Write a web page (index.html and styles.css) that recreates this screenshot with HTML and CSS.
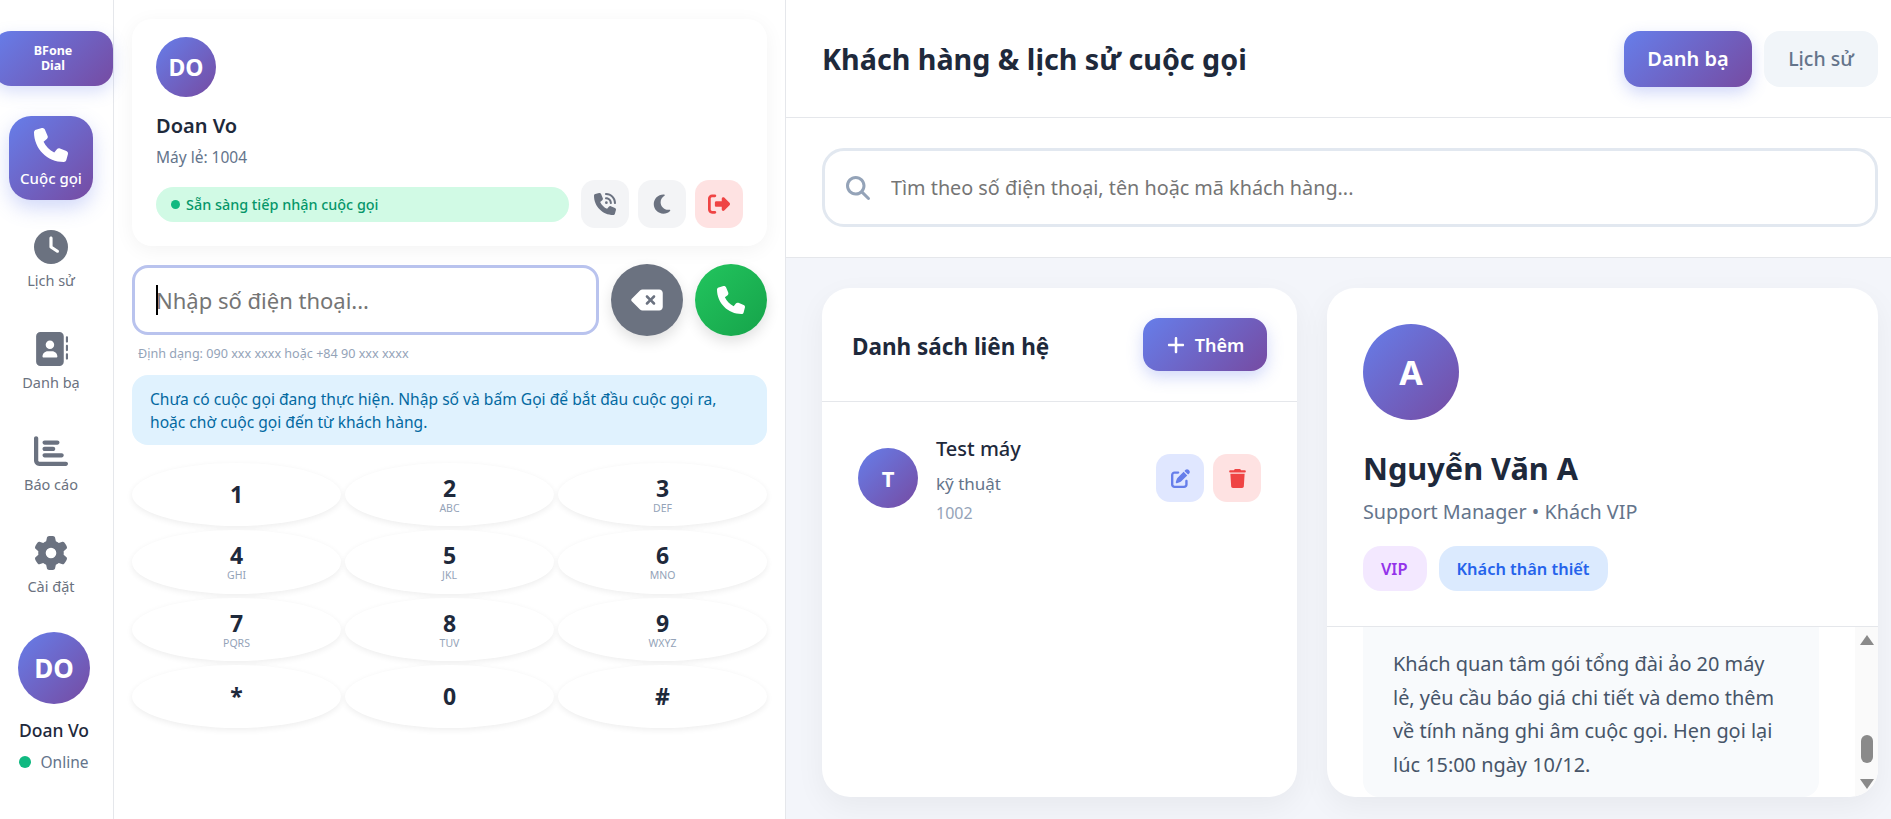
FILE: index.html
```html
<!DOCTYPE html>
<html lang="vi">
<head>
    <meta charset="UTF-8">
    <meta name="viewport" content="width=device-width, initial-scale=1.0">
    <title>BFone Dial</title>
    <link rel="stylesheet" href="styles.css">
</head>
<body>
    <svg class="sprite" xmlns="http://www.w3.org/2000/svg">
        <symbol id="i-phone" viewBox="0 0 512 512"><path d="M164.9 24.6c-7.7-18.6-28-28.5-47.4-23.2l-88 24C12.1 30.2 0 46 0 64C0 311.4 200.6 512 448 512c18 0 33.8-12.1 38.6-29.5l24-88c5.3-19.4-4.6-39.7-23.2-47.4l-96-40c-16.3-6.8-35.2-2.1-46.3 11.6L304.7 368C234.3 334.7 177.3 277.7 144 207.3L193.3 167c13.7-11.2 18.4-30 11.6-46.3l-40-96z"/></symbol>
        <symbol id="i-clock" viewBox="0 0 512 512"><path d="M256 0a256 256 0 1 1 0 512A256 256 0 1 1 256 0zM232 120V256c0 8 4 15.5 10.7 20l96 64c11 7.4 25.9 4.4 33.3-6.7s4.4-25.9-6.7-33.3L280 243.2V120c0-13.3-10.7-24-24-24s-24 10.7-24 24z"/></symbol>
        <symbol id="i-book" viewBox="0 0 512 512"><path d="M96 0C60.7 0 32 28.7 32 64V448c0 35.3 28.7 64 64 64H384c35.3 0 64-28.7 64-64V64c0-35.3-28.7-64-64-64H96zM208 288h64c44.2 0 80 35.8 80 80c0 8.8-7.2 16-16 16H144c-8.8 0-16-7.2-16-16c0-44.2 35.8-80 80-80zm-32-96a64 64 0 1 1 128 0 64 64 0 1 1 -128 0zM512 80c0-8.8-7.2-16-16-16s-16 7.2-16 16v64c0 8.8 7.2 16 16 16s16-7.2 16-16V80zM496 192c-8.8 0-16 7.2-16 16v64c0 8.8 7.2 16 16 16s16-7.2 16-16V208c0-8.8-7.2-16-16-16zm16 144c0-8.8-7.2-16-16-16s-16 7.2-16 16v64c0 8.8 7.2 16 16 16s16-7.2 16-16V336z"/></symbol>
        <symbol id="i-chart" viewBox="0 0 512 512"><path d="M32 32c17.7 0 32 14.3 32 32V400c0 8.8 7.2 16 16 16H480c17.7 0 32 14.3 32 32s-14.3 32-32 32H80c-44.2 0-80-35.8-80-80V64C0 46.3 14.3 32 32 32zm96 96c0-17.7 14.3-32 32-32l192 0c17.7 0 32 14.3 32 32s-14.3 32-32 32l-192 0c-17.7 0-32-14.3-32-32zm32 64H288c17.7 0 32 14.3 32 32s-14.3 32-32 32H160c-17.7 0-32-14.3-32-32s14.3-32 32-32zm0 96H416c17.7 0 32 14.3 32 32s-14.3 32-32 32H160c-17.7 0-32-14.3-32-32s14.3-32 32-32z"/></symbol>
        <symbol id="i-gear" viewBox="0 0 512 512"><path d="M495.9 166.6c3.2 8.7 .5 18.4-6.4 24.6l-43.3 39.4c1.1 8.3 1.7 16.8 1.7 25.4s-.6 17.1-1.7 25.4l43.3 39.4c6.9 6.2 9.6 15.9 6.4 24.6c-4.4 11.9-9.7 23.3-15.8 34.3l-4.7 8.1c-6.6 11-14 21.4-22.1 31.2c-5.9 7.2-15.7 9.6-24.5 6.8l-55.7-17.7c-13.4 10.3-28.2 18.9-44 25.4l-12.5 57.1c-2 9.1-9 16.3-18.2 17.8c-13.8 2.3-28 3.5-42.5 3.5s-28.7-1.2-42.5-3.5c-9.2-1.5-16.2-8.7-18.2-17.8l-12.5-57.1c-15.8-6.5-30.6-15.1-44-25.4L83.1 425.9c-8.8 2.8-18.6 .3-24.5-6.8c-8.1-9.8-15.5-20.2-22.1-31.2l-4.7-8.1c-6.1-11-11.4-22.4-15.8-34.3c-3.2-8.7-.5-18.4 6.4-24.6l43.3-39.4C64.6 273.1 64 264.6 64 256s.6-17.1 1.7-25.4L22.4 191.2c-6.9-6.2-9.6-15.9-6.4-24.6c4.4-11.9 9.7-23.3 15.8-34.3l4.7-8.1c6.6-11 14-21.4 22.1-31.2c5.9-7.2 15.7-9.6 24.5-6.8l55.7 17.7c13.4-10.3 28.2-18.9 44-25.4l12.5-57.1c2-9.1 9-16.3 18.2-17.8C227.3 1.2 241.5 0 256 0s28.7 1.2 42.5 3.5c9.2 1.5 16.2 8.7 18.2 17.8l12.5 57.1c15.8 6.5 30.6 15.1 44 25.4l55.7-17.7c8.8-2.8 18.6-.3 24.5 6.8c8.1 9.8 15.5 20.2 22.1 31.2l4.7 8.1c6.1 11 11.4 22.4 15.8 34.3zM256 336a80 80 0 1 0 0-160 80 80 0 1 0 0 160z"/></symbol>
        <symbol id="i-volume" viewBox="0 0 512 512"><path d="M280 0C408.1 0 512 103.9 512 232c0 13.3-10.7 24-24 24s-24-10.7-24-24c0-101.6-82.4-184-184-184c-13.3 0-24-10.7-24-24s10.7-24 24-24zm8 192a32 32 0 1 1 0 64 32 32 0 1 1 0-64zm-32-72c0-13.3 10.7-24 24-24c75.1 0 136 60.9 136 136c0 13.3-10.7 24-24 24s-24-10.7-24-24c0-48.6-39.4-88-88-88c-13.3 0-24-10.7-24-24zM117.5 1.4c19.4-5.3 39.7 4.6 47.4 23.2l40 96c6.8 16.3 2.1 35.2-11.6 46.3L144 207.3c33.3 70.4 90.3 127.4 160.7 160.7L345 318.7c11.2-13.7 30-18.4 46.3-11.6l96 40c18.6 7.7 28.5 28 23.2 47.4l-24 88C481.8 499.9 466 512 448 512C200.6 512 0 311.4 0 64C0 46 12.1 30.2 29.5 25.4l88-24z"/></symbol>
        <symbol id="i-moon" viewBox="0 0 384 512"><path d="M223.5 32C100 32 0 132.3 0 256S100 480 223.5 480c60.6 0 115.5-24.2 155.8-63.4c5-4.9 6.3-12.5 3.1-18.7s-10.1-9.7-17-8.5c-9.8 1.7-19.8 2.6-30.1 2.6c-96.9 0-175.5-78.8-175.5-176c0-65.8 36-123.1 89.3-153.3c6.1-3.5 9.2-10.5 7.7-17.3s-7.3-11.9-14.3-12.5c-6.3-.5-12.6-.8-19-.8z"/></symbol>
        <symbol id="i-logout" viewBox="0 0 512 512"><path d="M377.9 105.9L500.7 228.7c7.2 7.2 11.3 17.1 11.3 27.3s-4.1 20.1-11.3 27.3L377.9 406.1c-6.4 6.4-15 9.9-24 9.9c-18.7 0-33.9-15.2-33.9-33.9l0-62.1-128 0c-17.7 0-32-14.3-32-32l0-64c0-17.7 14.3-32 32-32l128 0 0-62.1c0-18.7 15.2-33.9 33.9-33.9c9 0 17.6 3.6 24 9.9zM160 96L96 96c-17.7 0-32 14.3-32 32l0 256c0 17.7 14.3 32 32 32l64 0c17.7 0 32 14.3 32 32s-14.3 32-32 32l-64 0c-53 0-96-43-96-96L0 128C0 75 43 32 96 32l64 0c17.7 0 32 14.3 32 32s-14.3 32-32 32z"/></symbol>
        <symbol id="i-delete" viewBox="0 0 576 512"><path d="M576 128c0-35.3-28.7-64-64-64H205.3c-17 0-33.3 6.7-45.3 18.7L9.4 233.4c-6 6-9.4 14.1-9.4 22.6s3.4 16.6 9.4 22.6L160 429.3c12 12 28.3 18.7 45.3 18.7H512c35.3 0 64-28.7 64-64V128zM271 175c9.4-9.4 24.6-9.4 33.9 0l47 47 47-47c9.4-9.4 24.6-9.4 33.9 0s9.4 24.6 0 33.9l-47 47 47 47c9.4 9.4 9.4 24.6 0 33.9s-24.6 9.4-33.9 0l-47-47-47 47c-9.4 9.4-24.6 9.4-33.9 0s-9.4-24.6 0-33.9l47-47-47-47c-9.4-9.4-9.4-24.6 0-33.9z"/></symbol>
        <symbol id="i-search" viewBox="0 0 512 512"><path d="M416 208c0 45.9-14.9 88.3-40 122.7L502.6 457.4c12.5 12.5 12.5 32.8 0 45.3s-32.8 12.5-45.3 0L330.7 376c-34.4 25.2-76.8 40-122.7 40C93.1 416 0 322.9 0 208S93.1 0 208 0S416 93.1 416 208zM208 352a144 144 0 1 0 0-288 144 144 0 1 0 0 288z"/></symbol>
        <symbol id="i-plus" viewBox="0 0 448 512"><path d="M256 80c0-17.7-14.3-32-32-32s-32 14.3-32 32V224H48c-17.7 0-32 14.3-32 32s14.3 32 32 32H192V432c0 17.7 14.3 32 32 32s32-14.3 32-32V288H400c17.7 0 32-14.3 32-32s-14.3-32-32-32H256V80z"/></symbol>
        <symbol id="i-edit" viewBox="0 0 512 512"><path d="M471.6 21.7c-21.9-21.9-57.3-21.9-79.2 0L362.3 51.7l97.9 97.9 30.1-30.1c21.9-21.9 21.9-57.3 0-79.2L471.6 21.7zm-299.2 220c-6.1 6.1-10.8 13.6-13.5 21.9l-29.6 88.8c-2.9 8.6-.6 18.1 5.8 24.6s15.9 8.7 24.6 5.8l88.8-29.6c8.2-2.7 15.7-7.4 21.9-13.5L437.7 172.3 339.7 74.3 172.4 241.7zM96 64C43 64 0 107 0 160V416c0 53 43 96 96 96H352c53 0 96-43 96-96V320c0-17.7-14.3-32-32-32s-32 14.3-32 32v96c0 17.7-14.3 32-32 32H96c-17.7 0-32-14.3-32-32V160c0-17.7 14.3-32 32-32h96c17.7 0 32-14.3 32-32s-14.3-32-32-32H96z"/></symbol>
        <symbol id="i-trash" viewBox="0 0 448 512"><path d="M135.2 17.7L128 32H32C14.3 32 0 46.3 0 64S14.3 96 32 96H416c17.7 0 32-14.3 32-32s-14.3-32-32-32H320l-7.2-14.3C307.4 6.8 296.3 0 284.2 0H163.8c-12.1 0-23.2 6.8-28.6 17.7zM416 128H32L53.2 467c1.6 25.3 22.6 45 47.9 45H346.9c25.3 0 46.3-19.7 47.9-45L416 128z"/></symbol>
    </svg>

    <aside class="sidebar">
        <div class="logo">BFone<br>Dial</div>
        <nav class="nav">
            <a class="nav-item active"><svg class="nav-icon"><use href="#i-phone"/></svg><span>Cuộc gọi</span></a>
            <a class="nav-item"><svg class="nav-icon"><use href="#i-clock"/></svg><span>Lịch sử</span></a>
            <a class="nav-item"><svg class="nav-icon"><use href="#i-book"/></svg><span>Danh bạ</span></a>
            <a class="nav-item"><svg class="nav-icon"><use href="#i-chart"/></svg><span>Báo cáo</span></a>
            <a class="nav-item"><svg class="nav-icon"><use href="#i-gear"/></svg><span>Cài đặt</span></a>
        </nav>
        <div class="side-user">
            <div class="avatar avatar-side">DO</div>
            <div class="side-name">Doan Vo</div>
            <div class="side-status"><i class="dot"></i>Online</div>
        </div>
    </aside>

    <section class="dialer">
        <div class="agent-card">
            <div class="avatar avatar-agent">DO</div>
            <div class="agent-name">Doan Vo</div>
            <div class="agent-ext">Máy lẻ: 1004</div>
            <div class="agent-row">
                <div class="agent-status"><i class="dot dot-small"></i>Sẵn sàng tiếp nhận cuộc gọi</div>
                <button class="tool-btn"><svg><use href="#i-volume"/></svg></button>
                <button class="tool-btn"><svg><use href="#i-moon"/></svg></button>
                <button class="tool-btn danger"><svg><use href="#i-logout"/></svg></button>
            </div>
        </div>

        <div class="dial-row">
            <div class="dial-field">
                <input class="dial-input" type="text" placeholder="Nhập số điện thoại...">
                <span class="caret"></span>
            </div>
            <button class="round-btn backspace"><svg class="icon-delete"><use href="#i-delete"/></svg></button>
            <button class="round-btn call"><svg class="icon-call"><use href="#i-phone"/></svg></button>
        </div>
        <p class="dial-hint">Định dạng: 090 xxx xxxx hoặc +84 90 xxx xxxx</p>
        <p class="call-info">Chưa có cuộc gọi đang thực hiện. Nhập số và bấm Gọi để bắt đầu cuộc gọi ra, hoặc chờ cuộc gọi đến từ khách hàng.</p>

        <div class="keypad">
            <button class="key"><b>1</b></button>
            <button class="key"><b>2</b><small>ABC</small></button>
            <button class="key"><b>3</b><small>DEF</small></button>
            <button class="key"><b>4</b><small>GHI</small></button>
            <button class="key"><b>5</b><small>JKL</small></button>
            <button class="key"><b>6</b><small>MNO</small></button>
            <button class="key"><b>7</b><small>PQRS</small></button>
            <button class="key"><b>8</b><small>TUV</small></button>
            <button class="key"><b>9</b><small>WXYZ</small></button>
            <button class="key"><b>*</b></button>
            <button class="key"><b>0</b></button>
            <button class="key"><b>#</b></button>
        </div>
    </section>

    <main class="content">
        <header class="content-head">
            <h1>Khách hàng &amp; lịch sử cuộc gọi</h1>
            <div class="tabs">
                <button class="tab active">Danh bạ</button>
                <button class="tab">Lịch sử</button>
            </div>
        </header>

        <div class="search-bar">
            <div class="search-box">
                <svg class="search-icon"><use href="#i-search"/></svg>
                <input class="search-input" type="text" placeholder="Tìm theo số điện thoại, tên hoặc mã khách hàng...">
            </div>
        </div>

        <div class="panels">
            <section class="contacts">
                <div class="contacts-head">
                    <h2>Danh sách liên hệ</h2>
                    <button class="add-btn"><svg><use href="#i-plus"/></svg>Thêm</button>
                </div>
                <div class="contact">
                    <div class="avatar avatar-contact">T</div>
                    <div class="contact-text">
                        <div class="contact-name">Test máy</div>
                        <div class="contact-dept">kỹ thuật</div>
                        <div class="contact-ext">1002</div>
                    </div>
                    <button class="tool-btn edit"><svg><use href="#i-edit"/></svg></button>
                    <button class="tool-btn danger"><svg><use href="#i-trash"/></svg></button>
                </div>
            </section>

            <section class="detail">
                <div class="detail-head">
                    <div class="avatar avatar-detail">A</div>
                    <div class="detail-name">Nguyễn Văn A</div>
                    <div class="detail-role">Support Manager • Khách VIP</div>
                    <div class="tags">
                        <span class="tag tag-vip">VIP</span>
                        <span class="tag tag-loyal">Khách thân thiết</span>
                    </div>
                </div>
                <div class="detail-body">
                    <div class="detail-scroll">
                        <p class="note">Khách quan tâm gói tổng đài ảo 20 máy lẻ, yêu cầu báo giá chi tiết và demo thêm về tính năng ghi âm cuộc gọi. Hẹn gọi lại lúc 15:00 ngày 10/12.</p>
                    </div>
                    <div class="scrollbar">
                        <i class="arrow-up"></i>
                        <i class="thumb"></i>
                        <i class="arrow-down"></i>
                    </div>
                </div>
            </section>
        </div>
    </main>
</body>
</html>
```

FILE: styles.css
```css
* {
    box-sizing: border-box;
}
body {
    display: flex;
    height: 100vh;
    margin: 0;
    overflow: hidden;
    font-family: "Noto Sans", "Open Sans", sans-serif;
    background-color: #fff;
    color: #1e293b;
}
button, input {
    font-family: inherit;
}
button {
    border: none;
    padding: 0;
}
p, h1, h2 {
    margin: 0;
}
.sprite {
    display: none;
}
svg {
    fill: currentColor;
}
.avatar {
    display: flex;
    align-items: center;
    justify-content: center;
    flex-shrink: 0;
    border-radius: 50%;
    background: linear-gradient(135deg, #667eea, #764ba2);
    color: #fff;
    font-weight: 700;
}
.dot {
    display: inline-block;
    width: 12px;
    height: 12px;
    margin-right: 9px;
    border-radius: 50%;
    background: #10b981;
}

/* Sidebar */
.sidebar {
    display: flex;
    flex-direction: column;
    flex-shrink: 0;
    width: 114px;
    padding: 31px 0 0 9px;
    border-right: 1px solid #e5e7eb;
}
.logo {
    width: 120px;
    height: 55px;
    margin-left: -16px;
    padding-top: 12px;
    border-radius: 18px;
    background: linear-gradient(135deg, #667eea, #764ba2);
    box-shadow: 0 6px 16px rgba(102, 126, 234, 0.25);
    color: #fff;
    font-size: 12.5px;
    font-weight: 700;
    line-height: 15px;
    text-align: center;
}
.nav {
    display: flex;
    flex-direction: column;
    gap: 18px;
    margin-top: 30px;
}
.nav-item {
    display: flex;
    flex-direction: column;
    align-items: center;
    gap: 7px;
    width: 84px;
    height: 84px;
    padding-top: 12px;
    border-radius: 22px;
    color: #6b7280;
    font-size: 14.5px;
    line-height: 19px;
}
.nav-item.active {
    background: linear-gradient(135deg, #667eea, #764ba2);
    box-shadow: 0 8px 20px rgba(102, 126, 234, 0.3);
    color: #fff;
    font-size: 15px;
    font-weight: 500;
}
.nav-icon {
    width: 34px;
    height: 34px;
}
.side-user {
    display: flex;
    flex-direction: column;
    align-items: center;
    width: 72px;
    margin: 24px 0 0 9px;
}
.avatar-side {
    width: 72px;
    height: 72px;
    font-size: 26px;
}
.side-name {
    margin-top: 15px;
    font-size: 17.5px;
    font-weight: 500;
    line-height: 22px;
    white-space: nowrap;
}
.side-status {
    display: flex;
    align-items: center;
    margin-top: 10px;
    color: #64748b;
    font-size: 15.5px;
    line-height: 22px;
    white-space: nowrap;
}

/* Dialer column */
.dialer {
    flex-shrink: 0;
    width: 672px;
    padding: 19px 18px 0;
    border-right: 1px solid #e5e7eb;
}
.agent-card {
    height: 227px;
    padding: 18px 24px;
    border-radius: 20px;
    background: #fff;
    box-shadow: 0 4px 20px rgba(0, 0, 0, 0.05);
}
.avatar-agent {
    width: 60px;
    height: 60px;
    font-size: 23px;
}
.agent-name {
    margin-top: 16px;
    font-size: 20px;
    font-weight: 600;
    line-height: 26px;
}
.agent-ext {
    margin-top: 8px;
    color: #64748b;
    font-size: 15.5px;
    line-height: 20px;
}
.agent-row {
    display: flex;
    align-items: center;
    gap: 9px;
    margin-top: 13px;
}
.agent-status {
    display: flex;
    align-items: center;
    width: 413px;
    height: 35px;
    margin-right: 3px;
    padding-left: 15px;
    border-radius: 18px;
    background: #d1fae5;
    color: #059669;
    font-size: 14.4px;
    font-weight: 500;
}
.dot-small {
    width: 9px;
    height: 9px;
    margin-right: 6px;
}
.tool-btn {
    display: flex;
    align-items: center;
    justify-content: center;
    flex-shrink: 0;
    width: 48px;
    height: 48px;
    border-radius: 14px;
    background: #f3f4f6;
    color: #6b7280;
}
.tool-btn svg {
    width: 22px;
    height: 22px;
}
.tool-btn.danger {
    background: #fee2e2;
    color: #ef4444;
}
.tool-btn.edit {
    background: #e0e7ff;
    color: #667eea;
}
.dial-row {
    display: flex;
    align-items: center;
    gap: 12px;
    margin-top: 18px;
}
.dial-field {
    position: relative;
    flex: 1;
}
.dial-input {
    display: block;
    width: 100%;
    height: 70px;
    padding: 0 21px;
    border: 3px solid #b9c3ee;
    border-radius: 16px;
    background: #fff;
    outline: none;
    font-size: 22px;
}
.dial-input::placeholder {
    color: #757575;
}
.caret {
    position: absolute;
    top: 20px;
    left: 24px;
    width: 2px;
    height: 30px;
    background: #000;
}
.round-btn {
    display: flex;
    align-items: center;
    justify-content: center;
    flex-shrink: 0;
    width: 72px;
    height: 72px;
    border-radius: 50%;
    box-shadow: 0 6px 14px rgba(0, 0, 0, 0.12);
    color: #fff;
}
.backspace {
    background: #6b7280;
}
.call {
    background: linear-gradient(135deg, #22c55e, #16a34a);
}
.icon-delete {
    width: 32px;
    height: 28px;
}
.icon-call {
    width: 28px;
    height: 28px;
}
.dial-hint {
    margin: 9px 0 0 6px;
    color: #94a3b8;
    font-size: 12.6px;
    line-height: 17px;
}
.call-info {
    margin-top: 13px;
    padding: 13px 18px 11px;
    border-radius: 16px;
    background: #e0f2fe;
    color: #0369a1;
    font-size: 15.6px;
    line-height: 23px;
}
.keypad {
    display: grid;
    grid-template-columns: repeat(3, 1fr);
    grid-auto-rows: 63.3px;
    gap: 4px;
    margin-top: 18px;
}
.key {
    display: flex;
    flex-direction: column;
    align-items: center;
    justify-content: center;
    border-radius: 50%;
    background: #fff;
    box-shadow: 0 2px 6px rgba(0, 0, 0, 0.07);
    color: #1e293b;
}
.key b {
    font-size: 23px;
    font-weight: 700;
    line-height: 27px;
}
.key small {
    color: #94a3b8;
    font-size: 10.5px;
    line-height: 12px;
}

/* Right side */
.content {
    display: flex;
    flex: 1;
    flex-direction: column;
    min-width: 0;
}
.content-head {
    display: flex;
    align-items: center;
    justify-content: space-between;
    height: 118px;
    padding: 0 13px 0 36px;
    border-bottom: 1px solid #e5e7eb;
}
h1 {
    font-size: 28.7px;
    font-weight: 700;
}
.tabs {
    display: flex;
    gap: 12px;
}
.tab {
    width: 114px;
    height: 56px;
    border-radius: 16px;
    background: #f1f5f9;
    color: #64748b;
    font-size: 19.5px;
    font-weight: 500;
}
.tab.active {
    width: 128px;
    background: linear-gradient(135deg, #667eea, #764ba2);
    box-shadow: 0 6px 16px rgba(102, 126, 234, 0.3);
    color: #fff;
    font-size: 20px;
    font-weight: 600;
}
.search-bar {
    height: 140px;
    padding: 30px 13px 0 36px;
    border-bottom: 1px solid #e5e7eb;
}
.search-box {
    display: flex;
    align-items: center;
    height: 79px;
    padding-left: 21px;
    border: 3px solid #e2e8f0;
    border-radius: 22px;
}
.search-icon {
    flex-shrink: 0;
    width: 24px;
    height: 24px;
    color: #94a3b8;
}
.search-input {
    flex: 1;
    margin-left: 19px;
    border: none;
    outline: none;
    font-size: 19.8px;
}
.search-input::placeholder {
    color: #757575;
}
.panels {
    display: grid;
    flex: 1;
    grid-template-columns: 475px 1fr;
    gap: 30px;
    min-height: 0;
    padding: 30px 13px 22px 36px;
    background: #f3f5fa;
}
.contacts, .detail {
    border-radius: 28px;
    background: #fff;
    box-shadow: 0 10px 30px rgba(0, 0, 0, 0.05);
}
.contacts-head {
    display: flex;
    align-items: center;
    justify-content: space-between;
    height: 114px;
    padding: 0 30px;
    border-bottom: 1px solid #e5e7eb;
}
h2 {
    margin-top: 3px;
    font-size: 22.5px;
    font-weight: 700;
}
.add-btn {
    display: flex;
    align-items: center;
    justify-content: center;
    gap: 9px;
    width: 124px;
    height: 53px;
    border-radius: 16px;
    background: linear-gradient(135deg, #667eea, #764ba2);
    box-shadow: 0 6px 16px rgba(102, 126, 234, 0.3);
    color: #fff;
    font-size: 18px;
    font-weight: 600;
}
.add-btn svg {
    width: 20px;
    height: 20px;
}
.contact {
    display: flex;
    align-items: flex-start;
    padding: 33px 36px 0;
}
.avatar-contact {
    width: 60px;
    height: 60px;
    margin-top: 13px;
    font-size: 22px;
}
.contact-text {
    flex: 1;
    margin-left: 18px;
}
.contact-name {
    font-size: 20px;
    font-weight: 500;
    line-height: 28px;
}
.contact-dept {
    margin-top: 9px;
    color: #64748b;
    font-size: 17px;
    line-height: 24px;
}
.contact-ext {
    margin-top: 6px;
    color: #94a3b8;
    font-size: 16px;
    line-height: 22px;
}
.contact .tool-btn {
    margin-top: 19px;
}
.contact .tool-btn svg {
    width: 19px;
    height: 19px;
}
.contact .danger {
    margin-left: 9px;
}
.detail {
    display: flex;
    flex-direction: column;
    min-height: 0;
    overflow: hidden;
}
.detail-head {
    height: 339px;
    padding: 36px 36px 0;
    border-bottom: 1px solid #e5e7eb;
}
.avatar-detail {
    width: 96px;
    height: 96px;
    font-size: 34px;
}
.detail-name {
    margin-top: 26px;
    font-size: 30.7px;
    font-weight: 700;
    line-height: 44px;
}
.detail-role {
    margin-top: 8px;
    color: #64748b;
    font-size: 19.8px;
    line-height: 28px;
}
.tags {
    display: flex;
    gap: 12px;
    margin-top: 20px;
}
.tag {
    display: flex;
    align-items: center;
    height: 45px;
    padding: 0 18px;
    border-radius: 18px;
    font-size: 16.4px;
    font-weight: 600;
}
.tag-vip {
    padding: 0 19px 0 18px;
    background: #f3e8ff;
    color: #9333ea;
}
.tag-loyal {
    background: #dbeafe;
    color: #2563eb;
}
.detail-body {
    display: flex;
    flex: 1;
    min-height: 0;
}
.detail-scroll {
    display: flex;
    flex: 1;
    flex-direction: column;
    justify-content: flex-end;
    overflow: hidden;
    padding: 0 36px;
}
.note {
    flex-shrink: 0;
    padding: 60px 30px 16px;
    border-radius: 16px;
    background: #f8fafc;
    color: #475569;
    font-size: 19.9px;
    line-height: 33.5px;
}
.scrollbar {
    display: flex;
    flex-direction: column;
    align-items: center;
    flex-shrink: 0;
    width: 23px;
    padding: 8px 0 4px;
    background: #fafafa;
}
.arrow-up, .arrow-down {
    width: 0;
    height: 0;
    border-right: 7px solid transparent;
    border-left: 7px solid transparent;
}
.arrow-up {
    border-bottom: 10px solid #8a8a8a;
}
.arrow-down {
    margin-top: 16px;
    border-top: 10px solid #8a8a8a;
}
.thumb {
    width: 12px;
    height: 28px;
    margin-top: 90px;
    border-radius: 6px;
    background: #8a8a8a;
}
```
